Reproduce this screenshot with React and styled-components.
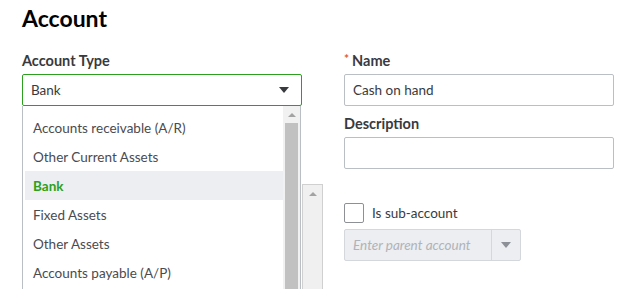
import React from 'react'
import styled, { createGlobalStyle } from 'styled-components'

const GlobalStyle = createGlobalStyle`
  html, body {
    margin: 0;
    padding: 0;
    background: #fff;
    overflow: hidden;
  }
  body {
    font-family: Lato, "Open Sans", sans-serif;
    color: #393a3d;
  }
`

const Page = styled.div`
  width: 643px;
  height: 289px;
  padding: 3px 0 0 22px;
  box-sizing: border-box;
  overflow: hidden;
`

const Title = styled.h1`
  margin: 0 0 19px;
  font-size: 23px;
  font-weight: 700;
  line-height: 30px;
  color: #000;
`

const Columns = styled.div`
  display: flex;
  gap: 42px;
`

const Column = styled.div`
  width: ${p => p.$width}px;
  position: relative;
  display: flex;
  flex-direction: column;
`

const Label = styled.label`
  height: 18px;
  font-size: 14.5px;
  font-weight: 700;
  line-height: 18px;
  color: #393a3d;
  margin-bottom: 4px;
  display: flex;
  align-items: center;
  gap: 3px;
`

const Required = styled.span`
  color: #e4572e;
  font-size: 12px;
  line-height: 12px;
  align-self: flex-start;
  margin-top: 1px;
`

const Field = styled.div`
  height: 32px;
  box-sizing: border-box;
  border: 1px solid ${p => (p.$focus ? '#2ca01c' : '#babec5')};
  border-radius: 2px;
  display: flex;
  align-items: center;
  padding: 0 8px;
  font-size: 13.5px;
  color: #393a3d;
  margin-bottom: ${p => p.$mb || 0}px;
`

const Value = styled.span`
  flex: 1;
`

const Caret = styled.span`
  width: 0;
  height: 0;
  border-left: 5px solid transparent;
  border-right: 5px solid transparent;
  border-top: 6px solid ${p => p.$color || '#393a3d'};
  margin-right: ${p => p.$mr || 0}px;
`

const Menu = styled.div`
  position: absolute;
  top: 54px;
  left: 0;
  width: 279px;
  height: 200px;
  box-sizing: border-box;
  background: #fff;
  border-left: 1px solid #babec5;
  border-right: 1px solid #babec5;
  display: flex;
  z-index: 2;
`

const Options = styled.ul`
  list-style: none;
  margin: 0;
  padding: 7px 0 0 2px;
  flex: 1;
`

const Option = styled.li`
  height: 29px;
  display: flex;
  align-items: center;
  padding-left: 8px;
  font-size: 13.5px;
  background: ${p => (p.$active ? '#eceef1' : 'transparent')};
  color: ${p => (p.$active ? '#2ca01c' : '#4a4b4f')};
  font-weight: ${p => (p.$active ? 700 : 400)};
`

const Scrollbar = styled.div`
  width: 17px;
  background: #f1f1f1;
  display: flex;
  flex-direction: column;
  align-items: center;
`

const ScrollArrow = styled.span`
  width: 0;
  height: 0;
  border-left: 4px solid transparent;
  border-right: 4px solid transparent;
  border-bottom: 4px solid #a3a3a3;
  margin: 7px 0 6px;
`

const Thumb = styled.div`
  width: 13px;
  flex: 1;
  background: #c1c1c1;
`

const HiddenList = styled.div`
  position: absolute;
  top: 132px;
  left: 280px;
  width: 21px;
  height: 120px;
  box-sizing: border-box;
  background: #f0f0f0;
  border: 1px solid #d0d0d0;
  border-bottom: none;
  display: flex;
  justify-content: center;
  z-index: 1;
`

const Spacer = styled.div`
  height: ${p => p.$h}px;
`

const CheckRow = styled.label`
  display: flex;
  align-items: center;
  gap: 8px;
  font-size: 13.5px;
  color: #393a3d;
  margin-bottom: 6px;
`

const Box = styled.span`
  width: 20px;
  height: 20px;
  box-sizing: border-box;
  border: 1px solid #8d9096;
  border-radius: 2px;
`

const Combo = styled.div`
  width: 177px;
  height: 32px;
  box-sizing: border-box;
  border: 1px solid #d4d7dc;
  border-radius: 2px;
  background: #eceef1;
  display: flex;
`

const Placeholder = styled.span`
  flex: 1;
  display: flex;
  align-items: center;
  padding-left: 8px;
  font-size: 13.5px;
  font-style: italic;
  color: #b0b3b9;
  border-right: 1px solid #d4d7dc;
`

const ComboButton = styled.span`
  width: 28px;
  display: flex;
  align-items: center;
  justify-content: center;
`

const options = [
  'Accounts receivable (A/R)',
  'Other Current Assets',
  'Bank',
  'Fixed Assets',
  'Other Assets',
  'Accounts payable (A/P)',
]

export default function App() {
  return (
    <Page>
      <GlobalStyle />
      <Title>Account</Title>
      <Columns>
        <Column $width={280}>
          <Label>Account Type</Label>
          <Field $focus>
            <Value>Bank</Value>
            <Caret $mr={4} />
          </Field>
          <Menu>
            <Options>
              {options.map(o => (
                <Option key={o} $active={o === 'Bank'}>{o}</Option>
              ))}
            </Options>
            <Scrollbar>
              <ScrollArrow />
              <Thumb />
            </Scrollbar>
          </Menu>
          <HiddenList>
            <ScrollArrow />
          </HiddenList>
        </Column>
        <Column $width={270}>
          <Label><Required>*</Required>Name</Label>
          <Field $mb={9}>
            <Value>Cash on hand</Value>
          </Field>
          <Label>Description</Label>
          <Field />
          <Spacer $h={34} />
          <CheckRow>
            <Box />
            Is sub-account
          </CheckRow>
          <Combo>
            <Placeholder>Enter parent account</Placeholder>
            <ComboButton><Caret $color="#8d9096" /></ComboButton>
          </Combo>
        </Column>
      </Columns>
    </Page>
  )
}
